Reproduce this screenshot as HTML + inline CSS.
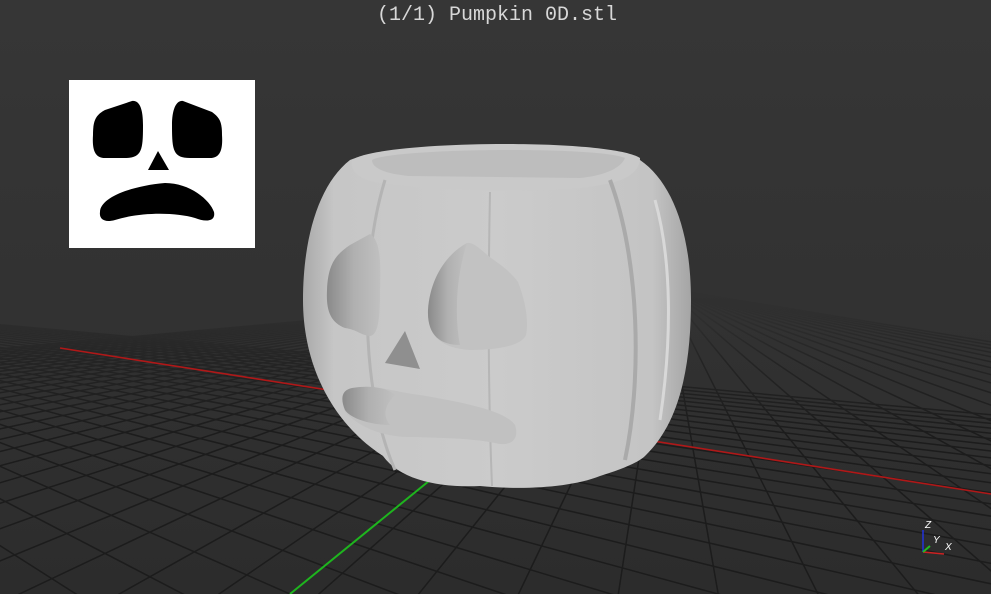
<!DOCTYPE html>
<html><head><meta charset="utf-8"><style>
html,body{margin:0;padding:0;width:991px;height:594px;overflow:hidden;background:#333}
svg{display:block;position:absolute;left:0;top:0}
</style></head><body>
<svg id="s" width="991" height="594" viewBox="0 0 991 594" xmlns="http://www.w3.org/2000/svg">
<defs>
<linearGradient id="bg" x1="0" y1="0" x2="0" y2="1">
<stop offset="0" stop-color="#363636"/><stop offset="0.5" stop-color="#323232"/><stop offset="1" stop-color="#2c2c2c"/>
</linearGradient>
<linearGradient id="fade" x1="0" y1="0" x2="0" y2="1">
<stop offset="0" stop-color="#323232" stop-opacity="1"/><stop offset="0.2" stop-color="#323232" stop-opacity="0.85"/><stop offset="0.5" stop-color="#313131" stop-opacity="0.4"/><stop offset="1" stop-color="#303030" stop-opacity="0"/>
</linearGradient>
<clipPath id="floor"><rect x="0" y="290" width="991" height="304"/></clipPath>
<linearGradient id="body" x1="0" y1="0" x2="1" y2="0">
<stop offset="0" stop-color="#a9a9a9"/><stop offset="0.08" stop-color="#c6c6c6"/><stop offset="0.5" stop-color="#cbcbcb"/><stop offset="0.9" stop-color="#c4c4c4"/><stop offset="1" stop-color="#a5a5a5"/>
</linearGradient>
<linearGradient id="hole" x1="0" y1="0" x2="1" y2="0">
<stop offset="0" stop-color="#8a8a8a"/><stop offset="0.5" stop-color="#b0b0b0"/><stop offset="1" stop-color="#c0c0c0"/>
</linearGradient>
</defs>
<rect width="991" height="594" fill="url(#bg)"/>
<g id="grid" stroke="#1c1c1c" stroke-width="1.5" fill="none" clip-path="url(#floor)"></g>
<rect x="0" y="286" width="991" height="150" fill="url(#fade)"/>
<line x1="60" y1="348" x2="991" y2="494" stroke="#b01818" stroke-width="1.6"/>
<line x1="290" y1="594" x2="440" y2="472" stroke="#1eb51e" stroke-width="2"/>

<path d="M350,160 C318,185 303,240 303,300 C303,360 328,420 383,456 C400,480 440,488 480,486 C520,490 570,488 600,476 C620,470 640,462 646,455 C682,420 691,360 691,300 C691,232 672,182 640,160 C600,140 400,140 350,160 Z" fill="url(#body)"/>
<path d="M352,160 C380,140 610,138 640,158 C640,172 625,182 600,185 C560,195 420,190 380,183 C360,180 350,172 352,160 Z" fill="#c9c9c9"/>
<path d="M372,160 C390,148 600,146 625,158 C620,170 600,176 580,178 L410,176 C385,174 372,168 372,160 Z" fill="#bdbdbd"/>
<path d="M385,180 C360,260 360,390 395,470" stroke="#b4b4b4" stroke-width="3" fill="none"/>
<path d="M490,192 C488,290 488,390 492,486" stroke="#b6b6b6" stroke-width="2" fill="none"/>
<path d="M610,180 C640,260 642,380 625,460" stroke="#aaaaaa" stroke-width="4" fill="none"/>
<path d="M655,200 C672,260 672,340 660,420" stroke="#d8d8d8" stroke-width="3" fill="none"/>
<path d="M370,234 C380,240 381,260 380,290 C380,320 378,335 370,336 C360,335 358,330 345,328 C330,322 326,310 327,290 C328,265 335,255 350,245 Z" fill="url(#hole)"/>
<path d="M467,243 C445,255 430,280 428,310 C427,335 440,348 470,350 C500,350 522,345 526,335 C529,320 525,300 518,282 C508,268 495,262 485,253 C478,247 472,242 467,243 Z" fill="#c2c2c2"/>
<path d="M467,243 C445,255 430,280 428,310 C427,335 440,345 460,345 C455,320 455,280 467,243 Z" fill="url(#hole)"/>
<path d="M405,331 L385,363 L420,369 Z" fill="#8f8f8f"/>
<path d="M352,388 C375,384 395,392 420,395 C460,402 505,410 515,425 C520,440 510,447 495,443 C470,438 440,438 415,437 C385,438 360,428 345,412 C340,398 342,390 352,388 Z" fill="#c1c1c1"/>
<path d="M352,388 C375,384 390,390 395,395 C385,405 382,415 390,425 C370,425 350,418 345,410 C340,398 342,390 352,388 Z" fill="url(#hole)"/>

<rect x="69" y="80" width="186" height="168" fill="#fff"/>
<path d="M132,101 C140,100 143,110 143,125 C143,150 142,158 125,158 L105,158 C95,158 92,150 93,135 C93,120 96,115 105,110 Z" fill="#000"/>
<path d="M183,101 C176,100 172,110 172,125 C172,150 173,158 190,158 L210,158 C220,158 223,150 222,135 C222,122 220,118 212,112 Z" fill="#000"/>
<path d="M158,151 L148,170 L169,170 Z" fill="#000"/>
<path d="M100,212 C100,198 130,186 165,183 C190,183 210,200 214,212 C216,222 205,222 195,218 C175,212 140,212 115,220 C104,223 99,219 100,212 Z" fill="#000"/>

<line x1="923" y1="552" x2="923" y2="530" stroke="#2233dd" stroke-width="1.5"/>
<line x1="923" y1="552" x2="944" y2="554" stroke="#cc2222" stroke-width="1.5"/>
<line x1="923" y1="552" x2="930" y2="546" stroke="#22bb22" stroke-width="2"/>
<text x="925" y="528" font-family="Liberation Sans,sans-serif" font-size="10" font-style="italic" fill="#fff">Z</text>
<text x="933" y="543" font-family="Liberation Sans,sans-serif" font-size="10" font-style="italic" fill="#fff">Y</text>
<text x="945" y="550" font-family="Liberation Sans,sans-serif" font-size="10" font-style="italic" fill="#fff">X</text>

<text x="497" y="20" text-anchor="middle" font-family="Liberation Mono,monospace" font-size="20" fill="#d8d8d8">(1/1) Pumpkin 0D.stl</text>
</svg>
<script>
(function(){
var g=document.getElementById('grid');var NS='http://www.w3.org/2000/svg';
var H=288;
var VR=[-405,H],VG=[665,H];
function line(a,b){var l=document.createElementNS(NS,'line');l.setAttribute('x1',a[0]);l.setAttribute('y1',a[1]);l.setAttribute('x2',b[0]);l.setAttribute('y2',b[1]);g.appendChild(l);}
function ext(V,P){var dx=P[0]-V[0],dy=P[1]-V[1];var k=3000/Math.hypot(dx,dy);return [V[0]+dx*k,V[1]+dy*k];}
var G0=[290,594];
for(var t=-12;t<26;t++){var s=1/(1+0.1*t);if(s<=0)continue;
 var p=[VG[0]+(G0[0]-VG[0])*s,VG[1]+(G0[1]-VG[1])*s];
 if(p[1]<H+4)continue;
 line(VR,ext(VR,p));}
var R0=[640,452];
for(var t=-19;t<34;t++){var s=1/(1+0.05*t);if(s<=0)continue;
 var p=[VR[0]+(R0[0]-VR[0])*s,VR[1]+(R0[1]-VR[1])*s];
 if(p[1]<H+4)continue;
 line(VG,ext(VG,p));}
})();
</script>
</body></html>
